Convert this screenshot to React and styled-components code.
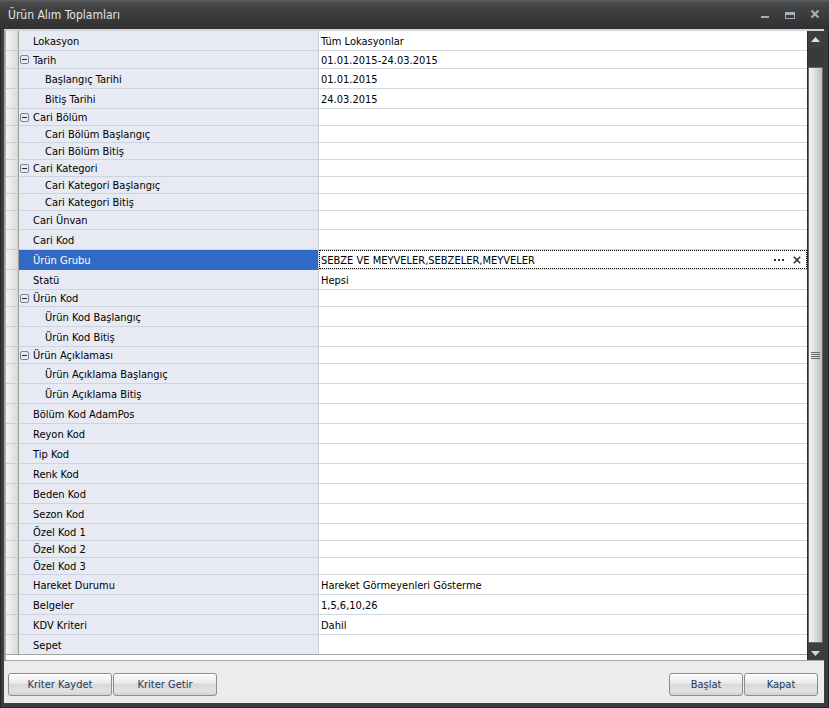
import React from "react";
import styled, { createGlobalStyle } from "styled-components";

const FONT = `"DejaVu Sans Condensed", Roboto, "Liberation Sans", Arial, sans-serif`;

const GlobalStyle = createGlobalStyle`
  html, body { margin: 0; padding: 0; background: #3b3c3e; }
  body { font-family: ${FONT}; font-size: 11px; }
  * { box-sizing: border-box; }
`;

const Window = styled.div`
  width: 829px;
  height: 708px;
  display: flex;
  flex-direction: column;
  background: #3c3d3f;
  box-shadow: inset 0 0 0 1px #262626;
  overflow: hidden;
`;

const TitleBar = styled.div`
  height: 29px;
  flex: none;
  display: flex;
  align-items: center;
  justify-content: space-between;
  padding-left: 8px;
  padding-right: 2px;
  background: linear-gradient(to bottom, #626262 0, #4b4c4e 2px, #404143 9px, #2f3032 100%);
`;

const Title = styled.div`
  color: #e4e4e4;
  font-size: 12px;
  font-family: ${FONT};
  padding-top: 1px;
`;

const TitleButtons = styled.div`
  display: flex;
  align-self: stretch;
`;

const TitleButton = styled.div`
  width: 25px;
  display: flex;
  align-items: center;
  justify-content: center;
`;

const Client = styled.div`
  flex: 1;
  display: flex;
  flex-direction: column;
  margin: 0 5px 5px 4px;
  background: #ececec;
`;

const GridFrame = styled.div`
  height: 631px;
  flex: none;
  display: flex;
  border-top: 2px solid #d6d6d6;
  border-left: 2px solid #a9a9a9;
  background: #fff;
`;

const Grid = styled.div`
  flex: 1;
  display: flex;
  flex-direction: column;
  background: #fff;
`;

const Row = styled.div`
  display: grid;
  grid-template-columns: 13px 300px 1fr;
  height: ${(p) => p.$h}px;
  flex: none;
  &:last-child > div {
    border-bottom-color: #a4a4a4;
  }
`;

const Indicator = styled.div`
  background: linear-gradient(to right, #f6f6f6, #e2e2e2 70%, #d6d6d6);
  border-right: 1px solid #9c9c9c;
  border-bottom: 1px solid #cfcfcf;
`;

const LabelCell = styled.div`
  display: flex;
  align-items: center;
  padding-left: ${(p) => p.$indent}px;
  padding-top: 1px;
  background: ${(p) => (p.$selected ? "#316ac5" : "#e7eaf3")};
  color: ${(p) => (p.$selected ? "#ffffff" : "#000000")};
  border-right: 1px solid #c6ccdb;
  border-bottom: 1px solid ${(p) => (p.$selected ? "#316ac5" : "#cdd3e1")};
  white-space: nowrap;
`;

const ExpandIcon = styled.svg`
  width: 9px;
  height: 9px;
  margin-right: 4px;
  margin-top: -1px;
  flex: none;
`;

const ValueCell = styled.div`
  display: flex;
  align-items: stretch;
  border-bottom: 1px solid #d3d8e5;
  color: #000;
  white-space: nowrap;
`;

const ValueText = styled.div`
  flex: 1;
  display: flex;
  align-items: center;
  padding-left: 2px;
  padding-top: 1px;
`;

const FocusBox = styled.div`
  flex: 1;
  display: flex;
  align-items: center;
  border: 1px dotted #000;
  padding-left: 1px;
  padding-right: 5px;
  padding-top: 1px;
`;

const EditorButtons = styled.div`
  margin-left: auto;
  display: flex;
  align-items: center;
  gap: 9px;
`;

const Scrollbar = styled.div`
  width: 17px;
  flex: none;
  display: flex;
  flex-direction: column;
  background: #3a3a3b;
  border-left: 1px solid #2c2c2c;
  padding-right: 1px;
`;

const ArrowButton = styled.div`
  height: 17px;
  flex: none;
  display: flex;
  align-items: center;
  justify-content: center;
  background: #3e3f41;
`;

const TrackSpace = styled.div`
  height: 19px;
  flex: none;
`;

const Thumb = styled.div`
  flex: 1;
  display: flex;
  align-items: center;
  justify-content: center;
  background: linear-gradient(to right, #f4f4f4 0%, #e4e4e4 35%, #cbcbcb 75%, #bdbdbd 100%);
  border: 1px solid #6a6a6a;
  border-radius: 1px;
`;

const Panel = styled.div`
  flex: 1;
  display: flex;
  justify-content: space-between;
  align-items: flex-start;
  padding: 12px 6px 0 4px;
  background: #ececec;
  border-top: 1px solid #a6a6a6;
`;

const ButtonGroup = styled.div`
  display: flex;
  gap: 1px;
`;

const Button = styled.button`
  width: ${(p) => p.$w}px;
  height: 23px;
  padding: 0;
  border: 1px solid #8d8d8d;
  border-radius: 3px;
  background: linear-gradient(to bottom, #fbfbfb 0%, #ececec 42%, #d8d8d8 50%, #e2e2e2 80%, #d2d2d2 100%);
  box-shadow: inset 0 1px 0 #ffffff;
  color: #1e3a5f;
  font-family: ${FONT};
  font-size: 11px;
  cursor: default;
`;

const rows = [
  { label: "Lokasyon", value: "Tüm Lokasyonlar", h: 20 },
  { label: "Tarih", value: "01.01.2015-24.03.2015", group: true, h: 18 },
  { label: "Başlangıç Tarihi", value: "01.01.2015", child: true, h: 20 },
  { label: "Bitiş Tarihi", value: "24.03.2015", child: true, h: 20 },
  { label: "Cari Bölüm", group: true, h: 17 },
  { label: "Cari Bölüm Başlangıç", child: true, h: 17 },
  { label: "Cari Bölüm Bitiş", child: true, h: 17 },
  { label: "Cari Kategori", group: true, h: 17 },
  { label: "Cari Kategori Başlangıç", child: true, h: 17 },
  { label: "Cari Kategori Bitiş", child: true, h: 17 },
  { label: "Cari Ünvan", h: 19 },
  { label: "Cari Kod", h: 20 },
  { label: "Ürün Grubu", value: "SEBZE VE MEYVELER,SEBZELER,MEYVELER", selected: true, h: 20 },
  { label: "Statü", value: "Hepsi", h: 20 },
  { label: "Ürün Kod", group: true, h: 17 },
  { label: "Ürün Kod Başlangıç", child: true, h: 20 },
  { label: "Ürün Kod Bitiş", child: true, h: 20 },
  { label: "Ürün Açıklaması", group: true, h: 17 },
  { label: "Ürün Açıklama Başlangıç", child: true, h: 20 },
  { label: "Ürün Açıklama Bitiş", child: true, h: 20 },
  { label: "Bölüm Kod AdamPos", h: 20 },
  { label: "Reyon Kod", h: 20 },
  { label: "Tip Kod", h: 20 },
  { label: "Renk Kod", h: 20 },
  { label: "Beden Kod", h: 20 },
  { label: "Sezon Kod", h: 20 },
  { label: "Özel Kod 1", h: 17 },
  { label: "Özel Kod 2", h: 17 },
  { label: "Özel Kod 3", h: 17 },
  { label: "Hareket Durumu", value: "Hareket Görmeyenleri Gösterme", h: 20 },
  { label: "Belgeler", value: "1,5,6,10,26", h: 20 },
  { label: "KDV Kriteri", value: "Dahil", h: 20 },
  { label: "Sepet", value: "", h: 20 },
];

const Minus = () => (
  <ExpandIcon viewBox="0 0 9 9">
    <rect x="0.5" y="0.5" width="8" height="8" rx="1.5" fill="none" stroke="#7d8594" />
    <line x1="2" y1="4.5" x2="7" y2="4.5" stroke="#2a2a2a" />
  </ExpandIcon>
);

const Ellipsis = () => (
  <svg width="10" height="2" viewBox="0 0 10 2">
    <rect x="0" y="0" width="2" height="2" fill="#333" />
    <rect x="4" y="0" width="2" height="2" fill="#333" />
    <rect x="8" y="0" width="2" height="2" fill="#333" />
  </svg>
);

const ClearX = () => (
  <svg width="8" height="8" viewBox="0 0 8 8">
    <path d="M0.8 0.8 L7.2 7.2 M7.2 0.8 L0.8 7.2" stroke="#333" strokeWidth="1.6" />
  </svg>
);

const UpArrow = () => (
  <svg width="9" height="5" viewBox="0 0 9 5">
    <path d="M0 5 L4.5 0 L9 5 Z" fill="#e2e2e2" />
  </svg>
);

const DownArrow = () => (
  <svg width="9" height="5" viewBox="0 0 9 5" style={{ marginTop: 4 }}>
    <path d="M0 0 L4.5 5 L9 0 Z" fill="#d8d8d8" />
  </svg>
);

const Grip = () => (
  <svg width="9" height="7" viewBox="0 0 9 7">
    {[0.5, 2.5, 4.5, 6.5].map((y) => (
      <line key={y} x1="0" x2="9" y1={y} y2={y} stroke="#6c6c6c" />
    ))}
  </svg>
);

export default function App() {
  return (
    <>
      <GlobalStyle />
      <Window>
        <TitleBar>
          <Title>Ürün Alım Toplamları</Title>
          <TitleButtons>
            <TitleButton>
              <svg width="10" height="10" viewBox="0 0 10 10" style={{ marginTop: 1 }}>
                <rect x="1" y="6" width="8" height="2" fill="#a6aeb8" />
              </svg>
            </TitleButton>
            <TitleButton>
              <svg width="10" height="10" viewBox="0 0 10 10" style={{ marginTop: 1 }}>
                <rect x="0.5" y="2.5" width="9" height="6" fill="none" stroke="#a6aeb8" />
                <rect x="0" y="2" width="10" height="3" fill="#a6aeb8" />
              </svg>
            </TitleButton>
            <TitleButton>
              <svg width="10" height="10" viewBox="0 0 10 10" style={{ marginTop: -1 }}>
                <path d="M1.5 1.5 L8.5 8.5 M8.5 1.5 L1.5 8.5" stroke="#a6aeb8" strokeWidth="2.2" />
              </svg>
            </TitleButton>
          </TitleButtons>
        </TitleBar>
        <Client>
          <GridFrame>
            <Grid>
              {rows.map((r) => (
                <Row key={r.label} $h={r.h}>
                  <Indicator />
                  <LabelCell $selected={r.selected} $indent={r.group ? 1 : r.child ? 26 : 14}>
                    {r.group && <Minus />}
                    {r.label}
                  </LabelCell>
                  <ValueCell>
                    {r.selected ? (
                      <FocusBox>
                        {r.value}
                        <EditorButtons>
                          <Ellipsis />
                          <ClearX />
                        </EditorButtons>
                      </FocusBox>
                    ) : (
                      <ValueText>{r.value}</ValueText>
                    )}
                  </ValueCell>
                </Row>
              ))}
            </Grid>
            <Scrollbar>
              <ArrowButton>
                <UpArrow />
              </ArrowButton>
              <TrackSpace />
              <Thumb>
                <Grip />
              </Thumb>
              <ArrowButton>
                <DownArrow />
              </ArrowButton>
            </Scrollbar>
          </GridFrame>
          <Panel>
            <ButtonGroup>
              <Button $w={104}>Kriter Kaydet</Button>
              <Button $w={104}>Kriter Getir</Button>
            </ButtonGroup>
            <ButtonGroup>
              <Button $w={74}>Başlat</Button>
              <Button $w={74}>Kapat</Button>
            </ButtonGroup>
          </Panel>
        </Client>
      </Window>
    </>
  );
}
